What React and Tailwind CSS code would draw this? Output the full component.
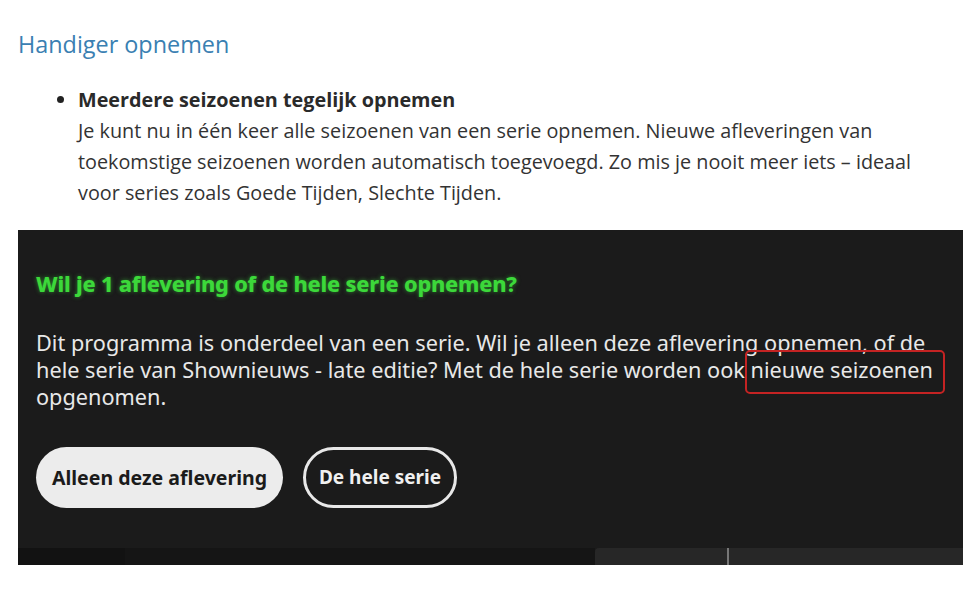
export default function App() {
  return (
    <div className="w-[980px] h-[590px] bg-white overflow-hidden font-['Open_Sans','Noto_Sans',sans-serif]">
      <div className="pl-[18px] pt-[28px]">
        <h2 className="text-[23.4px] leading-[32px] text-[#3a80b2] font-normal">Handiger opnemen</h2>

        <ul className="list-disc pl-[60px] mt-[24px] text-[#333] marker:text-[#222]">
          <li className="text-[19.8px] leading-[31px]">
            <span className="font-bold text-[#2a2a2a]">Meerdere seizoenen tegelijk opnemen</span>
            <br />
            Je kunt nu in één keer alle seizoenen van een serie opnemen. Nieuwe afleveringen van
            <br />
            toekomstige seizoenen worden automatisch toegevoegd. Zo mis je nooit meer iets – ideaal
            <br />
            voor series zoals Goede Tijden, Slechte Tijden.
          </li>
        </ul>

        {/* tv screenshot */}
        <div className="mt-[22px] w-[945px] h-[335px] bg-[#1b1b1b] flex flex-col font-['Noto_Sans','Open_Sans',sans-serif]">
          <div className="px-[18px] pt-[40px] flex-1">
            <h3 className="text-[21.7px] leading-[28px] font-extrabold text-[#3cd83a] [text-shadow:0_0_4px_rgba(60,220,60,0.55)] tracking-[-0.2px]">
              Wil je 1 aflevering of de hele serie opnemen?
            </h3>
            <p className="mt-[31px] text-[21.7px] leading-[27px] text-[#e8e8e8] whitespace-nowrap">
              Dit programma is onderdeel van een serie. Wil je alleen deze aflevering opnemen, of de
              <br />
              hele serie van Shownieuws - late editie? Met de hele serie worden ook{' '}
              <span className="relative">
                nieuwe seizoenen
                <span className="absolute -left-[6px] -right-[12px] -top-[5px] -bottom-[10px] border-2 border-[#c42323] rounded-[5px]" />
              </span>
              <br />
              opgenomen.
            </p>
            <div className="mt-[37px] flex gap-[20px]">
              <button className="w-[247px] h-[61px] rounded-full bg-[#ececec] text-[#1b1b1b] text-[19.5px] font-bold">
                Alleen deze aflevering
              </button>
              <button className="w-[154px] h-[61px] rounded-full border-[3px] border-[#e8e8e8] text-[#f0f0f0] text-[19px] font-bold">
                De hele serie
              </button>
            </div>
          </div>
          <div className="h-[17px] flex">
            <div className="w-[107px] bg-[#121212]" />
            <div className="w-[470px] bg-[#151515]" />
            <div className="flex-1 bg-[#272727] rounded-tl-[4px] relative">
              <div className="absolute left-[132px] top-0 w-[2px] h-[17px] bg-[#777]" />
            </div>
          </div>
        </div>
      </div>
    </div>
  );
}
